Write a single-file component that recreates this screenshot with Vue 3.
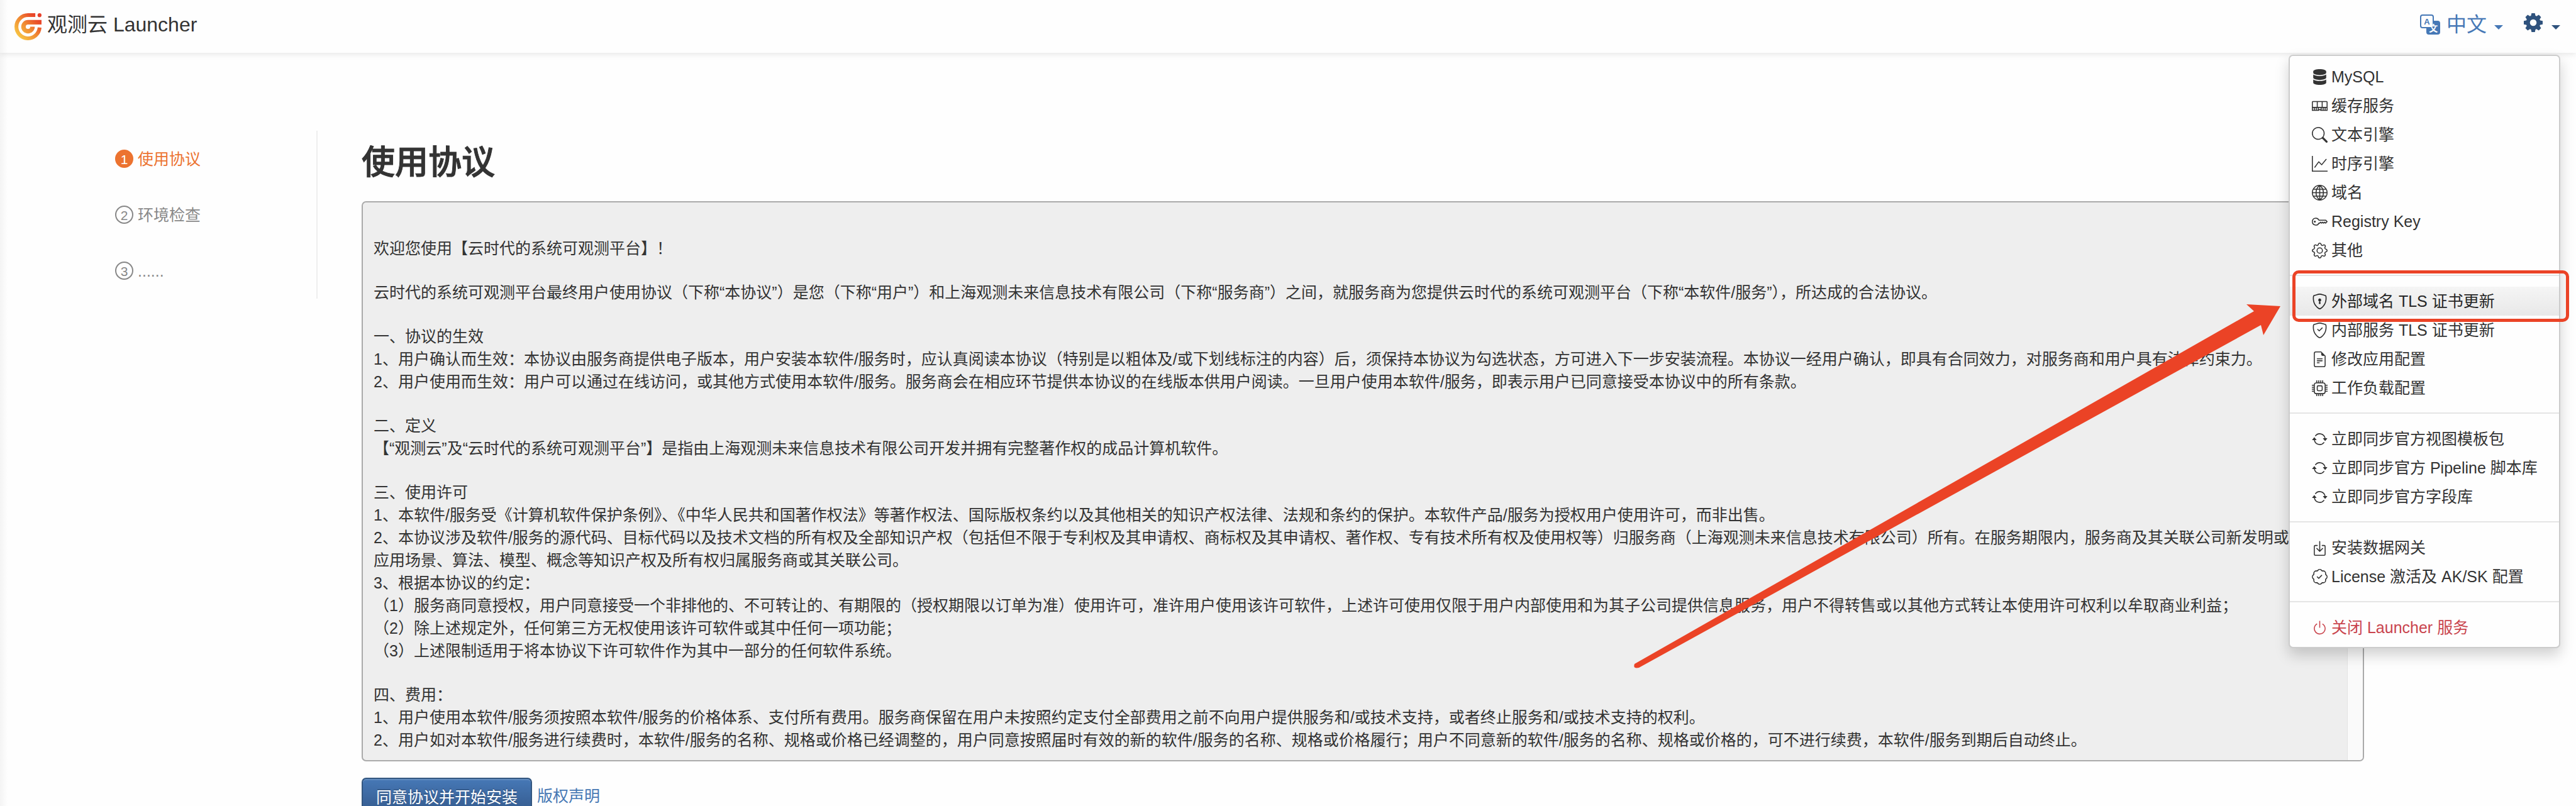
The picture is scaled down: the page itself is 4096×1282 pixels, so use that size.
<script setup>
import { ref } from 'vue'

const lang = ref('中文')

const steps = [
  { no: 1, label: '使用协议', active: true },
  { no: 2, label: '环境检查', active: false },
  { no: 3, label: '......', active: false },
]

const sections = [
  ['欢迎您使用【云时代的系统可观测平台】！'],
  ['云时代的系统可观测平台最终用户使用协议（下称“本协议”）是您（下称“用户”）和上海观测未来信息技术有限公司（下称“服务商”）之间，就服务商为您提供云时代的系统可观测平台（下称“本软件/服务”），所达成的合法协议。'],
  [
    '一、协议的生效',
    '1、用户确认而生效：本协议由服务商提供电子版本，用户安装本软件/服务时，应认真阅读本协议（特别是以粗体及/或下划线标注的内容）后，须保持本协议为勾选状态，方可进入下一步安装流程。本协议一经用户确认，即具有合同效力，对服务商和用户具有法律约束力。',
    '2、用户使用而生效：用户可以通过在线访问，或其他方式使用本软件/服务。服务商会在相应环节提供本协议的在线版本供用户阅读。一旦用户使用本软件/服务，即表示用户已同意接受本协议中的所有条款。',
  ],
  [
    '二、定义',
    '【“观测云”及“云时代的系统可观测平台”】是指由上海观测未来信息技术有限公司开发并拥有完整著作权的成品计算机软件。',
  ],
  [
    '三、使用许可',
    '1、本软件/服务受《计算机软件保护条例》、《中华人民共和国著作权法》等著作权法、国际版权条约以及其他相关的知识产权法律、法规和条约的保护。本软件产品/服务为授权用户使用许可，而非出售。',
    '2、本协议涉及软件/服务的源代码、目标代码以及技术文档的所有权及全部知识产权（包括但不限于专利权及其申请权、商标权及其申请权、著作权、专有技术所有权及使用权等）归服务商（上海观测未来信息技术有限公司）所有。在服务期限内，服务商及其关联公司新发明或发现的应用场景、算法、模型、概念等知识产权及所有权归属服务商或其关联公司。',
    '3、根据本协议的约定：',
    '（1）服务商同意授权，用户同意接受一个非排他的、不可转让的、有期限的（授权期限以订单为准）使用许可，准许用户使用该许可软件，上述许可使用仅限于用户内部使用和为其子公司提供信息服务，用户不得转售或以其他方式转让本使用许可权利以牟取商业利益；',
    '（2）除上述规定外，任何第三方无权使用该许可软件或其中任何一项功能；',
    '（3）上述限制适用于将本协议下许可软件作为其中一部分的任何软件系统。',
  ],
  [
    '四、费用：',
    '1、用户使用本软件/服务须按照本软件/服务的价格体系、支付所有费用。服务商保留在用户未按照约定支付全部费用之前不向用户提供服务和/或技术支持，或者终止服务和/或技术支持的权利。',
    '2、用户如对本软件/服务进行续费时，本软件/服务的名称、规格或价格已经调整的，用户同意按照届时有效的新的软件/服务的名称、规格或价格履行；用户不同意新的软件/服务的名称、规格或价格的，可不进行续费，本软件/服务到期后自动终止。',
  ],
]

const shield =
  'M5.338 1.59a61 61 0 0 0-2.837.856.48.48 0 0 0-.328.39c-.554 4.157.726 7.19 2.253 9.188a10.7 10.7 0 0 0 2.287 2.233c.346.244.652.42.893.533q.18.085.293.118a1 1 0 0 0 .101.025 1 1 0 0 0 .1-.025q.114-.034.294-.118c.24-.113.547-.29.893-.533a10.7 10.7 0 0 0 2.287-2.233c1.527-1.997 2.807-5.031 2.253-9.188a.48.48 0 0 0-.328-.39c-.651-.213-1.75-.56-2.837-.855C9.552 1.29 8.531 1.067 8 1.067c-.53 0-1.552.223-2.662.524zM5.072.56C6.157.265 7.31 0 8 0s1.843.265 2.928.56c1.11.3 2.229.655 2.887.87a1.54 1.54 0 0 1 1.044 1.262c.596 4.477-.787 7.795-2.465 9.99a11.8 11.8 0 0 1-2.517 2.453 7 7 0 0 1-1.048.625c-.28.132-.581.24-.829.24s-.548-.108-.829-.24a7 7 0 0 1-1.048-.625 11.8 11.8 0 0 1-2.517-2.453C1.928 10.487.545 7.169 1.141 2.692A1.54 1.54 0 0 1 2.185 1.43 63 63 0 0 1 5.072.56z'

// fill: even-odd filled outlines; line: stroked outlines; both on a 16-unit grid
const icons = {
  database: {
    fill: ['M14.6 2.3v1.4C14.6 5 11.6 6 8 6S1.4 5 1.4 3.7V2.3C1.4 1 4.4 0 8 0s6.6 1 6.6 2.3zM14.6 5.5v3.2C14.6 10 11.6 11 8 11s-6.6-1-6.6-2.3V5.5C2.8 6.5 5.4 7 8 7s5.2-.5 6.6-1.5zm0 5v3.2C14.6 15 11.6 16 8 16s-6.6-1-6.6-2.3v-3.2C2.8 11.5 5.4 12 8 12s5.2-.5 6.6-1.5z'],
  },
  memory: {
    line: ['M1 3.5h14a.5.5 0 0 1 .5.5v8.5H9l-.5-.8h-1l-.5.8H.5V4a.5.5 0 0 1 .5-.5zM.5 9.500h15M5.500 3.500v6M10.500 3.500v6M2.500 9.500v3M4.500 9.500v3M6.500 9.500v2.500M9.500 9.500v2.500M11.500 9.500v3M13.500 9.500v3'],
  },
  search: {
    fill: ['M11.742 10.344a6.5 6.5 0 1 0-1.397 1.398h-.001q.044.06.098.115l3.85 3.85a1 1 0 0 0 1.415-1.414l-3.85-3.85a1 1 0 0 0-.115-.1zM12 6.5a5.5 5.5 0 1 1-11 0 5.5 5.5 0 0 1 11 0'],
  },
  graph: {
    fill: ['M0 0h1v15h15v1H0zm14.817 3.113a.5.5 0 0 1 .07.704l-4.5 5.5a.5.5 0 0 1-.74.037L7.06 6.767l-3.656 5.027a.5.5 0 0 1-.808-.588l4-5.5a.5.5 0 0 1 .758-.06l2.609 2.61 4.15-5.073a.5.5 0 0 1 .704-.07'],
  },
  globe: {
    line: ['M8 .5a7.5 7.5 0 1 0 0 15a7.5 7.5 0 0 0 0-15zM8 .5c-5 3.8-5 11.2 0 15M8 .5c5 3.8 5 11.2 0 15M8 .5v15M.5 8h15M1.5 4.5h13M1.5 11.5h13'],
  },
  key: {
    fill: [
      'M0 8a4 4 0 0 1 7.465-2H14a.5.5 0 0 1 .354.146l1.5 1.5a.5.5 0 0 1 0 .708l-1.5 1.5a.5.5 0 0 1-.708 0L13 9.207l-.646.647a.5.5 0 0 1-.708 0L11 9.207l-.646.647a.5.5 0 0 1-.708 0L9 9.207l-.646.647A.5.5 0 0 1 8 10h-.535A4 4 0 0 1 0 8m4-3a3 3 0 1 0 2.712 4.285A.5.5 0 0 1 7.163 9h.63l.853-.854a.5.5 0 0 1 .708 0l.646.647.646-.647a.5.5 0 0 1 .708 0l.646.647.646-.647a.5.5 0 0 1 .708 0l.646.647.793-.793-1-1h-6.63a.5.5 0 0 1-.451-.285A3 3 0 0 0 4 5',
      'M4 8a1 1 0 1 1-2 0 1 1 0 0 1 2 0',
    ],
  },
  gear: {
    fill: [
      'M8 4.754a3.246 3.246 0 1 0 0 6.492 3.246 3.246 0 0 0 0-6.492M5.754 8a2.246 2.246 0 1 1 4.492 0 2.246 2.246 0 0 1-4.492 0',
      'M9.796 1.343c-.527-1.79-3.065-1.79-3.592 0l-.094.319a.873.873 0 0 1-1.255.52l-.292-.16c-1.64-.892-3.433.902-2.54 2.541l.159.292a.873.873 0 0 1-.52 1.255l-.319.094c-1.79.527-1.79 3.065 0 3.592l.319.094a.873.873 0 0 1 .52 1.255l-.16.292c-.892 1.64.901 3.434 2.541 2.54l.292-.159a.873.873 0 0 1 1.255.52l.094.319c.527 1.79 3.065 1.79 3.592 0l.094-.319a.873.873 0 0 1 1.255-.52l.292.16c1.64.893 3.434-.902 2.54-2.541l-.159-.292a.873.873 0 0 1 .52-1.255l.319-.094c1.79-.527 1.79-3.065 0-3.592l-.319-.094a.873.873 0 0 1-.52-1.255l.16-.292c.893-1.64-.902-3.433-2.541-2.54l-.292.159a.873.873 0 0 1-1.255-.52zm-2.633.283c.246-.835 1.428-.835 1.674 0l.094.319a1.873 1.873 0 0 0 2.693 1.115l.291-.16c.764-.415 1.6.42 1.184 1.185l-.159.292a1.873 1.873 0 0 0 1.116 2.692l.318.094c.835.246.835 1.428 0 1.674l-.319.094a1.873 1.873 0 0 0-1.115 2.693l.16.291c.415.764-.42 1.6-1.185 1.184l-.291-.159a1.873 1.873 0 0 0-2.693 1.116l-.094.318c-.246.835-1.428.835-1.674 0l-.094-.319a1.873 1.873 0 0 0-2.692-1.115l-.292.16c-.764.415-1.6-.42-1.184-1.185l.159-.291A1.873 1.873 0 0 0 1.945 8.93l-.319-.094c-.835-.246-.835-1.428 0-1.674l.319-.094A1.873 1.873 0 0 0 3.06 4.377l-.16-.292c-.415-.764.42-1.6 1.185-1.184l.292.159a1.873 1.873 0 0 0 2.692-1.115z',
    ],
  },
  shieldLock: {
    fill: [shield, 'M9.5 6.5a1.5 1.5 0 0 1-1 1.415l.385 1.99a.5.5 0 0 1-.491.595h-.788a.5.5 0 0 1-.49-.595l.384-1.99a1.5 1.5 0 1 1 2-1.415'],
  },
  shieldCheck: {
    fill: [shield, 'M10.854 5.146a.5.5 0 0 1 0 .708l-3 3a.5.5 0 0 1-.708 0l-1.5-1.5a.5.5 0 1 1 .708-.708L7.5 7.793l2.646-2.647a.5.5 0 0 1 .708 0'],
  },
  file: {
    fill: [
      'M5.5 7a.5.5 0 0 0 0 1h5a.5.5 0 0 0 0-1zM5 9.5a.5.5 0 0 1 .5-.5h5a.5.5 0 0 1 0 1h-5a.5.5 0 0 1-.5-.5m0 2a.5.5 0 0 1 .5-.5h2a.5.5 0 0 1 0 1h-2a.5.5 0 0 1-.5-.5',
      'M9.5 0H4a2 2 0 0 0-2 2v12a2 2 0 0 0 2 2h8a2 2 0 0 0 2-2V4.5zm0 1H4a1 1 0 0 0-1 1v12a1 1 0 0 0 1 1h8a1 1 0 0 0 1-1V4.5h-2A1.5 1.5 0 0 1 9.5 3z',
    ],
  },
  cpu: {
    line: ['M4.5 2.5h7a2 2 0 0 1 2 2v7a2 2 0 0 1-2 2h-7a2 2 0 0 1-2-2v-7a2 2 0 0 1 2-2zM6.5 5.5h3a1 1 0 0 1 1 1v3a1 1 0 0 1-1 1h-3a1 1 0 0 1-1-1v-3a1 1 0 0 1 1-1zM5 0v2.5M7 0v2.5M9 0v2.5M11 0v2.5M5 13.5V16M7 13.5V16M9 13.5V16M11 13.5V16M0 5h2.5M0 7h2.5M0 9h2.5M0 11h2.5M13.5 5H16M13.5 7H16M13.5 9H16M13.5 11H16'],
  },
  sync: {
    fill: [
      'M11.534 7h3.932a.25.25 0 0 1 .192.41l-1.966 2.36a.25.25 0 0 1-.384 0l-1.966-2.36a.25.25 0 0 1 .192-.41m-11 2h3.932a.25.25 0 0 0 .192-.41L2.692 6.23a.25.25 0 0 0-.384 0L.342 8.59A.25.25 0 0 0 .534 9',
      'M8 3c-1.552 0-2.94.707-3.857 1.818a.5.5 0 1 1-.771-.636A6.002 6.002 0 0 1 13.917 7H12.9A5 5 0 0 0 8 3M3.1 9a5.002 5.002 0 0 0 8.757 2.182.5.5 0 1 1 .771.636A6.002 6.002 0 0 1 2.083 9z',
    ],
  },
  download: {
    fill: [
      'M3.5 6a.5.5 0 0 0-.5.5v8a.5.5 0 0 0 .5.5h9a.5.5 0 0 0 .5-.5v-8a.5.5 0 0 0-.5-.5h-2a.5.5 0 0 1 0-1h2A1.5 1.5 0 0 1 14 6.5v8a1.5 1.5 0 0 1-1.5 1.5h-9A1.5 1.5 0 0 1 2 14.5v-8A1.5 1.5 0 0 1 3.5 5h2a.5.5 0 0 1 0 1z',
      'M7.646 11.854a.5.5 0 0 0 .708 0l3-3a.5.5 0 0 0-.708-.708L8.5 10.293V1.5a.5.5 0 0 0-1 0v8.793L5.354 8.146a.5.5 0 1 0-.708.708z',
    ],
  },
  patch: {
    fill: [
      'M10.354 6.146a.5.5 0 0 1 0 .708l-3 3a.5.5 0 0 1-.708 0l-1.5-1.5a.5.5 0 1 1 .708-.708L7 8.793l2.646-2.647a.5.5 0 0 1 .708 0',
      'm10.273 2.513-.921-.944.715-.698.622.637.89-.011a2.89 2.89 0 0 1 2.924 2.924l-.01.89.636.622a2.89 2.89 0 0 1 0 4.134l-.637.622.011.89a2.89 2.89 0 0 1-2.924 2.924l-.89-.01-.622.636a2.89 2.89 0 0 1-4.134 0l-.622-.637-.89.011a2.89 2.89 0 0 1-2.924-2.924l.01-.89-.636-.622a2.89 2.89 0 0 1 0-4.134l.637-.622-.011-.89a2.89 2.89 0 0 1 2.924-2.924l.89.01.622-.636a2.89 2.89 0 0 1 4.134 0l-.715.698a1.89 1.89 0 0 0-2.704 0l-.92.944-1.32-.016a1.89 1.89 0 0 0-1.911 1.912l.016 1.318-.944.921a1.89 1.89 0 0 0 0 2.704l.944.92-.016 1.32a1.89 1.89 0 0 0 1.912 1.911l1.318-.016.921.944a1.89 1.89 0 0 0 2.704 0l.92-.944 1.32.016a1.89 1.89 0 0 0 1.911-1.912l-.016-1.318.944-.921a1.89 1.89 0 0 0 0-2.704l-.944-.92.016-1.32a1.89 1.89 0 0 0-1.912-1.911z',
    ],
  },
  power: {
    fill: ['M7.5 1v7h1V1z', 'M3 8.812a5 5 0 0 1 2.578-4.375l-.485-.874A6 6 0 1 0 11 3.616l-.501.865A5 5 0 1 1 3 8.812'],
  },
}

const groups = [
  [
    { icon: 'database', label: 'MySQL' },
    { icon: 'memory', label: '缓存服务' },
    { icon: 'search', label: '文本引擎' },
    { icon: 'graph', label: '时序引擎' },
    { icon: 'globe', label: '域名' },
    { icon: 'key', label: 'Registry Key' },
    { icon: 'gear', label: '其他' },
  ],
  [
    { icon: 'shieldLock', label: '外部域名 TLS 证书更新', hover: true },
    { icon: 'shieldCheck', label: '内部服务 TLS 证书更新' },
    { icon: 'file', label: '修改应用配置' },
    { icon: 'cpu', label: '工作负载配置' },
  ],
  [
    { icon: 'sync', label: '立即同步官方视图模板包' },
    { icon: 'sync', label: '立即同步官方 Pipeline 脚本库' },
    { icon: 'sync', label: '立即同步官方字段库' },
  ],
  [
    { icon: 'download', label: '安装数据网关' },
    { icon: 'patch', label: 'License 激活及 AK/SK 配置' },
  ],
  [{ icon: 'power', label: '关闭 Launcher 服务', danger: true }],
]
</script>

<template>
  <div class="page">
    <header class="navbar">
      <a href="#" class="brand">
        <svg class="logo" viewBox="0 0 48 48" aria-hidden="true">
          <defs>
            <linearGradient id="brandFill" gradientUnits="userSpaceOnUse" x1="6" y1="42" x2="42" y2="6">
              <stop offset="0" stop-color="#f8c744" />
              <stop offset="0.5" stop-color="#f08a33" />
              <stop offset="0.85" stop-color="#ea4f2a" />
              <stop offset="1" stop-color="#e8402a" />
            </linearGradient>
          </defs>
          <g fill="none" stroke="url(#brandFill)">
            <path d="M37 3.4H24A20.6 20.6 0 1 0 44.6 25.5" stroke-width="6.8" />
            <path d="M48 16H24A8 8 0 1 0 32 24" stroke-width="8" />
          </g>
          <circle cx="44.5" cy="3.5" r="3.5" fill="#e8402a" />
        </svg>
        <span>观测云 Launcher</span>
      </a>
      <div class="tools">
        <button type="button" class="tool">
          <svg class="translate" viewBox="0 0 16 16" aria-hidden="true">
            <path
              fill="currentColor"
              fill-rule="evenodd"
              d="M2 0h7a2 2 0 0 1 2 2v3h3a2 2 0 0 1 2 2v7a2 2 0 0 1-2 2H7a2 2 0 0 1-2-2v-3H2a2 2 0 0 1-2-2V2a2 2 0 0 1 2-2zm0 1a1 1 0 0 0-1 1v7a1 1 0 0 0 1 1h7a1 1 0 0 0 1-1V2a1 1 0 0 0-1-1z"
            />
            <text class="glyph" x="5.5" y="7.8" font-size="6.5" fill="currentColor">A</text>
            <text class="glyph" x="10.6" y="13.7" font-size="7" fill="#fff">文</text>
          </svg>
          <span class="lang">{{ lang }}</span>
          <span class="caret"></span>
        </button>
        <button type="button" class="tool settings" aria-label="设置">
          <svg class="cog" viewBox="-17 -17 34 34" aria-hidden="true">
            <circle r="9.5" fill="none" stroke="currentColor" stroke-width="7" />
            <path
              v-for="n in 8"
              :key="n"
              d="M-4.2-11.5L-3-17H3L4.2-11.5z"
              :transform="`rotate(${n * 45})`"
              fill="currentColor"
            />
          </svg>
          <span class="caret"></span>
        </button>
      </div>
    </header>

    <nav class="menu">
      <ul v-for="(group, g) in groups" :key="g" class="group">
        <li v-for="item in group" :key="item.label">
          <a href="#" class="item" :class="{ hover: item.hover, danger: item.danger }">
            <svg class="icon" viewBox="0 0 16 16" aria-hidden="true">
              <path v-for="d in icons[item.icon].fill" :key="d" :d="d" fill="currentColor" fill-rule="evenodd" />
              <path v-for="d in icons[item.icon].line" :key="d" :d="d" fill="none" stroke="currentColor" />
            </svg>
            <span>{{ item.label }}</span>
          </a>
        </li>
      </ul>
      <div class="marker"></div>
      <svg class="arrow" viewBox="0 0 1030 580" aria-hidden="true">
        <path d="M2 573L987 12L975 1L1029 4L1002 50L998 34L9 579Q-1 581 2 573z" fill="#eb4326" />
      </svg>
    </nav>

    <div class="layout">
      <ol class="steps">
        <li v-for="step in steps" :key="step.no" class="step" :class="{ active: step.active }">
          <span class="num">{{ step.no }}</span>
          <span>{{ step.label }}</span>
        </li>
      </ol>
      <main class="content">
        <h1>使用协议</h1>
        <section class="agreement">
          <div class="terms">
            <div v-for="(section, s) in sections" :key="s" class="block">
              <p v-for="line in section" :key="line">{{ line }}</p>
            </div>
          </div>
          <div class="track"></div>
        </section>
        <div class="actions">
          <button type="button" class="primary">同意协议并开始安装</button>
          <a href="#">版权声明</a>
        </div>
      </main>
    </div>
  </div>
</template>

<style>
body {
  margin: 0;
  overflow: hidden;
}
</style>

<style scoped>
.page {
  position: relative;
  box-sizing: border-box;
  height: 100vh;
  overflow: hidden;
  background: linear-gradient(to right, #f4f4f4, #fefefe 12px);
  color: #333;
  font-family: "Liberation Sans", "Noto Sans CJK SC", sans-serif;
  font-size: 25px;
  line-height: 36px;
}

ul,
ol,
p,
h1 {
  margin: 0;
  padding: 0;
  list-style: none;
}

a {
  color: #4678b4;
  text-decoration: none;
}

.navbar {
  display: flex;
  justify-content: space-between;
  align-items: center;
  box-sizing: border-box;
  height: 84px;
  padding: 0 25px 6px 23px;
  box-shadow: 0 0 11px rgba(0, 0, 0, 0.14);
}

.brand {
  display: flex;
  align-items: center;
  gap: 9px;
  color: #333;
  font-size: 32px;
}

.logo {
  width: 43px;
  height: 43px;
  margin-top: 6px;
}

.tools {
  display: flex;
  align-items: center;
  gap: 33px;
}

.tool {
  display: flex;
  align-items: center;
  gap: 10px;
  padding: 0;
  border: 0;
  background: none;
  color: #4678b6;
  font: inherit;
  font-size: 32px;
}

.lang {
  margin-right: 2px;
}

.settings {
  gap: 14px;
  color: #2f527d;
}

.translate {
  width: 32px;
  height: 32px;
}

.glyph {
  font-weight: bold;
  text-anchor: middle;
}

.cog {
  width: 30px;
  height: 30px;
  margin-bottom: 6px;
}

.caret {
  margin-top: 8px;
  border: 7px solid transparent;
  border-top-color: currentColor;
  border-bottom: 0;
}

.menu {
  position: absolute;
  top: 87px;
  right: 25px;
  z-index: 1;
  box-sizing: border-box;
  width: 432px;
  padding: 10px 0 8px;
  border: 2px solid #ccc;
  border-radius: 7px;
  background: #fefefe;
  box-shadow: 0 11px 22px rgba(0, 0, 0, 0.18);
}

.group + .group {
  margin-top: 16px;
  padding-top: 17px;
  border-top: 2px solid #e5e5e5;
}

.item {
  display: flex;
  align-items: center;
  gap: 6px;
  height: 46px;
  padding: 0 35px;
  color: #333;
  white-space: nowrap;
}

.item.hover {
  background: linear-gradient(#f5f5f5, #e8e8e8);
  color: #262626;
}

.item.danger {
  color: #c9444d;
}

.icon {
  flex: none;
  width: 25px;
  height: 25px;
}

.marker {
  position: absolute;
  top: 341px;
  right: -16px;
  left: 4px;
  box-sizing: border-box;
  height: 82px;
  border: 5px solid #eb4326;
  border-radius: 10px;
}

.arrow {
  position: absolute;
  top: 394px;
  right: 442px;
  width: 1030px;
  height: 580px;
}

.layout {
  display: flex;
  align-items: flex-start;
  gap: 70px;
  padding: 124px 337px 0 183px;
}

.steps {
  flex: none;
  width: 320px;
  border-right: 2px solid #eee;
}

.step {
  display: flex;
  align-items: center;
  gap: 7px;
  height: 89px;
  color: #888;
}

.num {
  display: flex;
  justify-content: center;
  align-items: center;
  box-sizing: border-box;
  width: 29px;
  height: 29px;
  padding-top: 3px;
  border: 2px solid currentColor;
  border-radius: 50%;
  font-size: 21px;
}

.active {
  color: #ec7330;
}

.active .num {
  border-color: #ec7330;
  background: #ec7330;
  color: #fff;
}

.content {
  flex: 1;
  min-width: 0;
}

h1 {
  margin: 19px 0 29px;
  font-size: 53px;
  font-weight: 500;
  line-height: 64px;
  -webkit-text-stroke: 1px currentColor;
}

.agreement {
  display: flex;
  border: 2px solid #aaa;
  border-radius: 7px;
  background: #eee;
  overflow: hidden;
}

.terms {
  flex: 1;
  min-width: 0;
  padding: 55px 4px 14px 17px;
}

.block + .block {
  margin-top: 34px;
}

.track {
  flex: none;
  width: 24px;
  border-left: 1px solid #e4e4e4;
  background: #fafafa;
}

.actions {
  display: flex;
  align-items: center;
  gap: 8px;
  margin-top: 26px;
}

.actions a {
  padding-bottom: 4px;
}

.primary {
  height: 61px;
  padding: 0 21px;
  border: 2px solid #33567f;
  border-radius: 7px;
  background: linear-gradient(#4678b6, #33588a);
  box-shadow: inset 0 2px 0 rgba(255, 255, 255, 0.15);
  color: #fff;
  font: inherit;
  text-shadow: 0 -2px 0 rgba(0, 0, 0, 0.2);
}
</style>
